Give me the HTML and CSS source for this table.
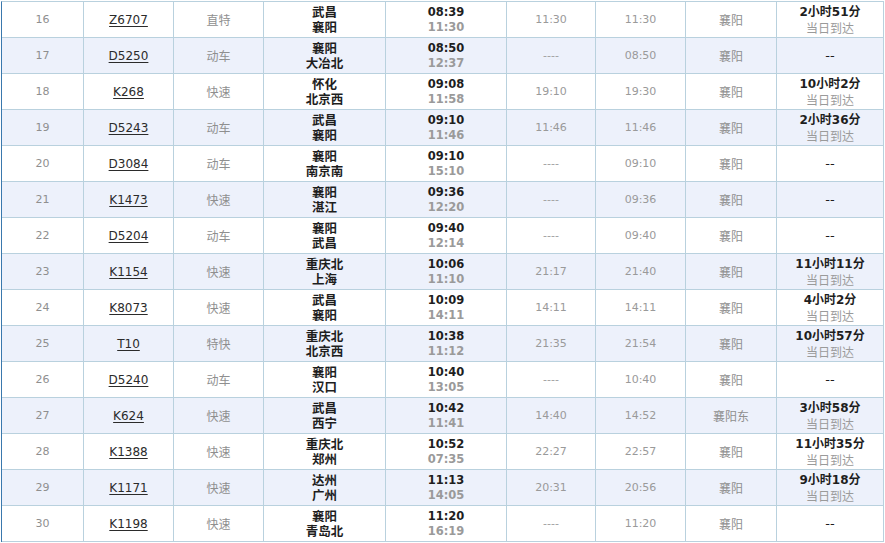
FILE: index.html
```html
<!DOCTYPE html>
<html lang="zh-CN">
<head>
<meta charset="utf-8">
<title>列车时刻表</title>
<link rel="stylesheet" href="styles.css">
</head>
<body>
<div class="table">
  <div class="row">
    <div class="cell num">16</div><div class="cell code"><a href="#">Z6707</a></div><div class="cell type">直特</div>
    <div class="cell st"><b>武昌</b><b>襄阳</b></div><div class="cell tm"><b>08:39</b><i>11:30</i></div>
    <div class="cell g">11:30</div><div class="cell g">11:30</div><div class="cell stn">襄阳</div>
    <div class="cell dur"><b>2小时51分</b><i>当日到达</i></div>
  </div>
  <div class="row alt">
    <div class="cell num">17</div><div class="cell code"><a href="#">D5250</a></div><div class="cell type">动车</div>
    <div class="cell st"><b>襄阳</b><b>大冶北</b></div><div class="cell tm"><b>08:50</b><i>12:37</i></div>
    <div class="cell g dash">----</div><div class="cell g">08:50</div><div class="cell stn">襄阳</div>
    <div class="cell dur none">--</div>
  </div>
  <div class="row">
    <div class="cell num">18</div><div class="cell code"><a href="#">K268</a></div><div class="cell type">快速</div>
    <div class="cell st"><b>怀化</b><b>北京西</b></div><div class="cell tm"><b>09:08</b><i>11:58</i></div>
    <div class="cell g">19:10</div><div class="cell g">19:30</div><div class="cell stn">襄阳</div>
    <div class="cell dur"><b>10小时2分</b><i>当日到达</i></div>
  </div>
  <div class="row alt">
    <div class="cell num">19</div><div class="cell code"><a href="#">D5243</a></div><div class="cell type">动车</div>
    <div class="cell st"><b>武昌</b><b>襄阳</b></div><div class="cell tm"><b>09:10</b><i>11:46</i></div>
    <div class="cell g">11:46</div><div class="cell g">11:46</div><div class="cell stn">襄阳</div>
    <div class="cell dur"><b>2小时36分</b><i>当日到达</i></div>
  </div>
  <div class="row">
    <div class="cell num">20</div><div class="cell code"><a href="#">D3084</a></div><div class="cell type">动车</div>
    <div class="cell st"><b>襄阳</b><b>南京南</b></div><div class="cell tm"><b>09:10</b><i>15:10</i></div>
    <div class="cell g dash">----</div><div class="cell g">09:10</div><div class="cell stn">襄阳</div>
    <div class="cell dur none">--</div>
  </div>
  <div class="row alt">
    <div class="cell num">21</div><div class="cell code"><a href="#">K1473</a></div><div class="cell type">快速</div>
    <div class="cell st"><b>襄阳</b><b>湛江</b></div><div class="cell tm"><b>09:36</b><i>12:20</i></div>
    <div class="cell g dash">----</div><div class="cell g">09:36</div><div class="cell stn">襄阳</div>
    <div class="cell dur none">--</div>
  </div>
  <div class="row">
    <div class="cell num">22</div><div class="cell code"><a href="#">D5204</a></div><div class="cell type">动车</div>
    <div class="cell st"><b>襄阳</b><b>武昌</b></div><div class="cell tm"><b>09:40</b><i>12:14</i></div>
    <div class="cell g dash">----</div><div class="cell g">09:40</div><div class="cell stn">襄阳</div>
    <div class="cell dur none">--</div>
  </div>
  <div class="row alt">
    <div class="cell num">23</div><div class="cell code"><a href="#">K1154</a></div><div class="cell type">快速</div>
    <div class="cell st"><b>重庆北</b><b>上海</b></div><div class="cell tm"><b>10:06</b><i>11:10</i></div>
    <div class="cell g">21:17</div><div class="cell g">21:40</div><div class="cell stn">襄阳</div>
    <div class="cell dur"><b>11小时11分</b><i>当日到达</i></div>
  </div>
  <div class="row">
    <div class="cell num">24</div><div class="cell code"><a href="#">K8073</a></div><div class="cell type">快速</div>
    <div class="cell st"><b>武昌</b><b>襄阳</b></div><div class="cell tm"><b>10:09</b><i>14:11</i></div>
    <div class="cell g">14:11</div><div class="cell g">14:11</div><div class="cell stn">襄阳</div>
    <div class="cell dur"><b>4小时2分</b><i>当日到达</i></div>
  </div>
  <div class="row alt">
    <div class="cell num">25</div><div class="cell code"><a href="#">T10</a></div><div class="cell type">特快</div>
    <div class="cell st"><b>重庆北</b><b>北京西</b></div><div class="cell tm"><b>10:38</b><i>11:12</i></div>
    <div class="cell g">21:35</div><div class="cell g">21:54</div><div class="cell stn">襄阳</div>
    <div class="cell dur"><b>10小时57分</b><i>当日到达</i></div>
  </div>
  <div class="row">
    <div class="cell num">26</div><div class="cell code"><a href="#">D5240</a></div><div class="cell type">动车</div>
    <div class="cell st"><b>襄阳</b><b>汉口</b></div><div class="cell tm"><b>10:40</b><i>13:05</i></div>
    <div class="cell g dash">----</div><div class="cell g">10:40</div><div class="cell stn">襄阳</div>
    <div class="cell dur none">--</div>
  </div>
  <div class="row alt">
    <div class="cell num">27</div><div class="cell code"><a href="#">K624</a></div><div class="cell type">快速</div>
    <div class="cell st"><b>武昌</b><b>西宁</b></div><div class="cell tm"><b>10:42</b><i>11:41</i></div>
    <div class="cell g">14:40</div><div class="cell g">14:52</div><div class="cell stn">襄阳东</div>
    <div class="cell dur"><b>3小时58分</b><i>当日到达</i></div>
  </div>
  <div class="row">
    <div class="cell num">28</div><div class="cell code"><a href="#">K1388</a></div><div class="cell type">快速</div>
    <div class="cell st"><b>重庆北</b><b>郑州</b></div><div class="cell tm"><b>10:52</b><i>07:35</i></div>
    <div class="cell g">22:27</div><div class="cell g">22:57</div><div class="cell stn">襄阳</div>
    <div class="cell dur"><b>11小时35分</b><i>当日到达</i></div>
  </div>
  <div class="row alt">
    <div class="cell num">29</div><div class="cell code"><a href="#">K1171</a></div><div class="cell type">快速</div>
    <div class="cell st"><b>达州</b><b>广州</b></div><div class="cell tm"><b>11:13</b><i>14:05</i></div>
    <div class="cell g">20:31</div><div class="cell g">20:56</div><div class="cell stn">襄阳</div>
    <div class="cell dur"><b>9小时18分</b><i>当日到达</i></div>
  </div>
  <div class="row">
    <div class="cell num">30</div><div class="cell code"><a href="#">K1198</a></div><div class="cell type">快速</div>
    <div class="cell st"><b>襄阳</b><b>青岛北</b></div><div class="cell tm"><b>11:20</b><i>16:19</i></div>
    <div class="cell g dash">----</div><div class="cell g">11:20</div><div class="cell stn">襄阳</div>
    <div class="cell dur none">--</div>
  </div>
</div>
</body>
</html>
```

FILE: styles.css
```css
html, body {
  margin: 0;
  padding: 0;
  background: #ffffff;
}

body {
  padding: 1px 0 0 1px;
  font-family: "DejaVu Sans", "Noto Sans CJK SC", sans-serif;
}

.table {
  width: 883px;
  border-left: 1px solid #3a78ad;
  border-top: 1px solid #b9d1de;
  box-sizing: border-box;
}

.row {
  display: grid;
  grid-template-columns: 82px 90px 90px 122px 121px 89px 90px 91px 107px;
  height: 36px;
  background: #ffffff;
}

.row.alt {
  background: #edf1fb;
}

.cell {
  box-sizing: border-box;
  height: 36px;
  border-right: 1px solid #b9d1de;
  border-bottom: 1px solid #b9d1de;
  display: flex;
  flex-direction: column;
  align-items: center;
  justify-content: center;
  text-align: center;
  color: #999999;
  font-size: 11px;
}

.num {
  font-size: 11px;
  color: #8f8f8f;
}

.code a {
  color: #2b2b2b;
  font-size: 12px;
  text-decoration: underline;
  text-underline-offset: 2px;
}

.type,
.stn {
  font-family: "Noto Sans CJK SC", sans-serif;
  font-size: 12px;
  color: #8f8f8f;
}

.st b {
  display: block;
  font-family: "DejaVu Sans", "Noto Sans CJK SC", sans-serif;
  font-weight: 700;
  font-size: 12.5px;
  line-height: 15px;
  color: #1e1e1e;
}

.tm b,
.tm i {
  display: block;
  font-style: normal;
  font-weight: 700;
  font-size: 11.5px;
  line-height: 15px;
}

.tm b {
  color: #1e1e1e;
}

.tm i {
  color: #9a9a9a;
}

.g {
  color: #9a9a9a;
}

.dash {
  font-size: 11px;
  color: #a0a0a0;
}

.dur b {
  display: block;
  font-family: "DejaVu Sans", "Noto Sans CJK SC", sans-serif;
  font-weight: 700;
  font-size: 12px;
  line-height: 15px;
  color: #1e1e1e;
}

.dur i {
  display: block;
  font-style: normal;
  font-family: "Noto Sans CJK SC", sans-serif;
  font-size: 12px;
  line-height: 15px;
  color: #9a9a9a;
}

.dur.none {
  color: #1e1e1e;
  font-size: 13px;
}
```
